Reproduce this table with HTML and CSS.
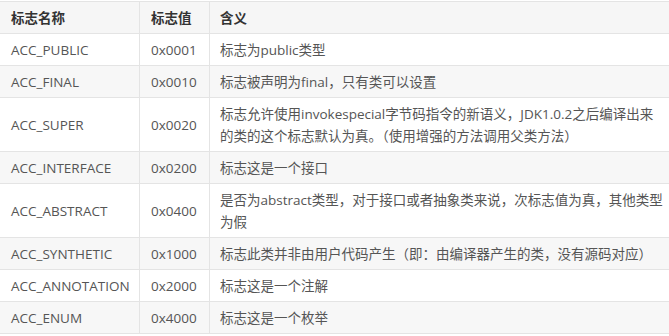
FILE: index.html
```html
<!DOCTYPE html>
<html lang="zh-CN">
<head>
<meta charset="utf-8">
<title>访问标志</title>
<link rel="stylesheet" href="styles.css">
</head>
<body>
<table class="flags">
  <colgroup>
    <col class="c-name">
    <col class="c-val">
    <col class="c-desc">
  </colgroup>
  <thead>
    <tr><th>标志名称</th><th>标志值</th><th>含义</th></tr>
  </thead>
  <tbody>
    <tr><td>ACC_PUBLIC</td><td>0x0001</td><td>标志为public类型</td></tr>
    <tr><td>ACC_FINAL</td><td>0x0010</td><td>标志被声明为final，只有类可以设置</td></tr>
    <tr><td>ACC_SUPER</td><td>0x0020</td><td>标志允许使用invokespecial字节码指令的新语义，JDK1.0.2之后编译出来的类的这个标志默认为真。（使用增强的方法调用父类方法）</td></tr>
    <tr><td>ACC_INTERFACE</td><td>0x0200</td><td>标志这是一个接口</td></tr>
    <tr><td>ACC_ABSTRACT</td><td>0x0400</td><td>是否为abstract类型，对于接口或者抽象类来说，次标志值为真，其他类型为假</td></tr>
    <tr><td>ACC_SYNTHETIC</td><td>0x1000</td><td>标志此类并非由用户代码产生（即：由编译器产生的类，没有源码对应）</td></tr>
    <tr><td>ACC_ANNOTATION</td><td>0x2000</td><td>标志这是一个注解</td></tr>
    <tr><td>ACC_ENUM</td><td>0x4000</td><td>标志这是一个枚举</td></tr>
  </tbody>
</table>
</body>
</html>
```
FILE: styles.css
```css
html, body {
  margin: 0;
  padding: 0;
  background: #ffffff;
}
body {
  padding-top: 1px;
  overflow: hidden;
  font-family: "Open Sans", "Noto Sans CJK SC", sans-serif;
  font-size: 13.5px;
  color: #555555;
}
.flags {
  border-collapse: collapse;
  table-layout: fixed;
  width: 676px;
  margin-left: -1px;
}
.c-name { width: 140px; }
.c-val { width: 70px; }
.c-desc { width: 466px; }
.flags th,
.flags td {
  border: 1px solid #e4e4e4;
  padding: 5px 10px 4px 11px;
  line-height: 22px;
  text-align: left;
  vertical-align: middle;
}
.flags td:nth-child(3),
.flags th:nth-child(3) {
  padding-left: 10px;
  padding-right: 10px;
}
.flags th {
  font-weight: bold;
  color: #333333;
  background: #f6f6f6;
}
.flags tbody tr:nth-child(even) td {
  background: #f7f7f7;
}
```
